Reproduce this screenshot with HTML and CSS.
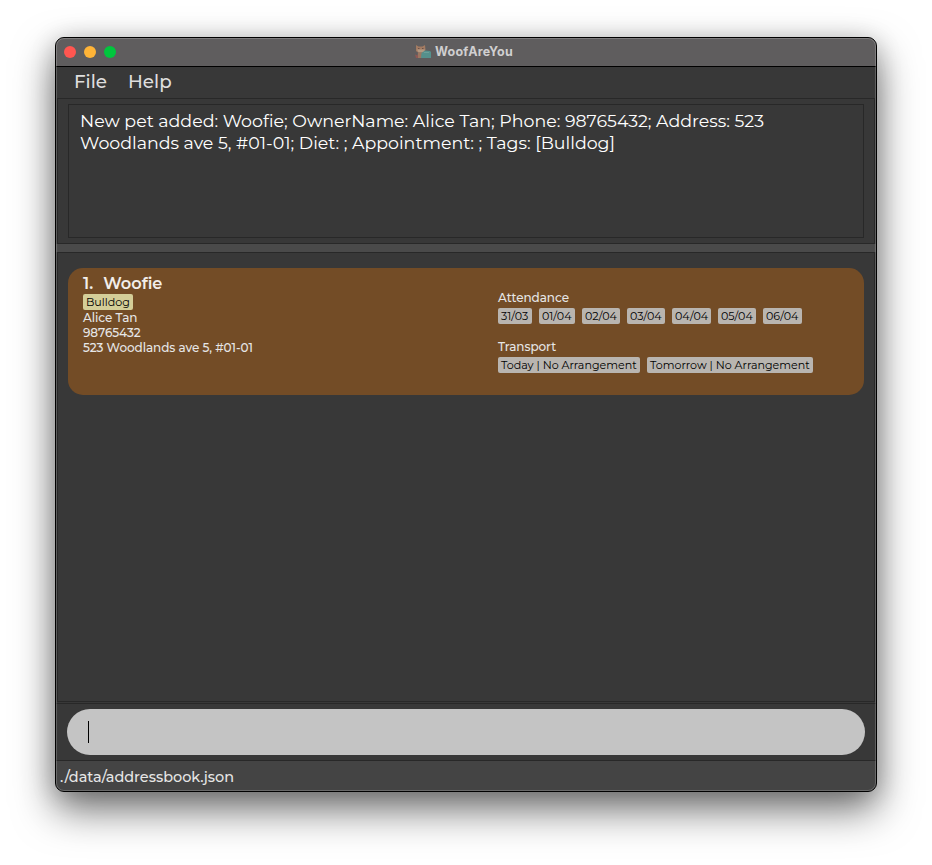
FILE: index.html
```html
<!DOCTYPE html>
<html lang="en">
<head>
<meta charset="utf-8">
<title>WoofAreYou</title>
<link rel="stylesheet" href="styles.css">
</head>
<body>
<div class="window">
  <header class="titlebar">
    <div class="lights"><i class="light red"></i><i class="light amber"></i><i class="light green"></i></div>
    <div class="title">
      <svg class="logo" width="16" height="14" viewBox="0 0 16 14">
        <path d="M1 0 3.500 1.500h4L10 0l.5 5-1.500 2.500H3L1 6z" fill="#a27b62"/>
        <path d="M2 4.500h8L8.500 7.500h-5z" fill="#b39a82"/>
        <path d="M3 3.500h1.500M7 3.500h1.500" stroke="#6c5049"/>
        <path d="M3 7.500h5V13H2.500z" fill="#9c7761"/>
        <path d="M0 9.500 3 10.500V13H1z" fill="#8f5855"/>
        <path d="M6.500 8 10 5.500l5 .5 1 1v6H6z" fill="#55908c"/>
        <path d="M9 7.500h5" stroke="#6b9f99"/>
      </svg>
      <span class="app-name">WoofAreYou</span>
    </div>
  </header>
  <nav class="menu"><span>File</span><span>Help</span></nav>
  <section class="result">
    <div class="result-box">
      <div>New pet added: Woofie; OwnerName: Alice Tan; Phone: 98765432; Address: 523</div>
      <div>Woodlands ave 5, #01-01; Diet: ; Appointment: ; Tags: [Bulldog]</div>
    </div>
  </section>
  <div class="splitter"></div>
  <main class="list">
    <article class="card">
      <div class="pet">
        <h2><span class="num">1.</span><span class="name">Woofie</span></h2>
        <div class="tags"><span class="tag breed">Bulldog</span></div>
        <p class="owner">Alice Tan</p>
        <p class="phone">98765432</p>
        <p class="address">523 Woodlands ave 5, #01-01</p>
      </div>
      <div class="schedule">
        <p class="attendance">Attendance</p>
        <div class="tags"><span class="tag w34">31/03</span><span class="tag w36">01/04</span><span class="tag w38">02/04</span><span class="tag w38">03/04</span><span class="tag w39">04/04</span><span class="tag w38">05/04</span><span class="tag w39">06/04</span></div>
        <p class="transport">Transport</p>
        <div class="tags"><span class="tag today">Today | No Arrangement</span><span class="tag tomorrow">Tomorrow | No Arrangement</span></div>
      </div>
    </article>
  </main>
  <section class="command"><div class="field"><i class="caret"></i></div></section>
  <footer class="status"><span>./data/addressbook.json</span></footer>
</div>
</body>
</html>
```
FILE: styles.css
```css
* { box-sizing: border-box; }
body {
  margin: 0;
  padding: 37px 55px 73px;
  height: 865px;
  overflow: hidden;
  background: #fff;
  font-family: Montserrat, Inter, sans-serif;
  color: #e6e6e6;
  white-space: nowrap;
}
.window {
  position: relative;
  display: flex;
  flex-direction: column;
  width: 822px;
  height: 755px;
  border: 1px solid #000;
  border-radius: 9px;
  overflow: hidden;
  background: #383838;
  box-shadow: 0 18px 40px rgba(0,0,0,.55), 0 3px 24px rgba(0,0,0,.18);
}
/* light rim inside the window frame */
.window::after {
  content: "";
  position: absolute;
  inset: 0;
  border: 1px solid rgba(255,255,255,.2);
  border-radius: 8px;
}
.titlebar {
  display: grid;
  grid-template-columns: 1fr auto 1fr;
  align-items: center;
  height: 29px;
  flex: none;
  background: #5f5d5e;
  border-bottom: 1px solid #000;
}
.lights { display: flex; gap: 8px; padding-left: 8px; }
.light { width: 12px; height: 12px; border-radius: 50%; }
.red { background: #ff5650; }
.amber { background: #ffb437; }
.green { background: #00c63d; }
.title { display: flex; align-items: center; gap: 4px; margin: -1px 4px 0 0; font-family: Inter, sans-serif; font-size: 12.5px; font-weight: 700; color: #d0cfd0; }
.app-name { letter-spacing: .25px; }
.menu { display: flex; gap: 21px; height: 31px; flex: none; padding-left: 18px; font-size: 18.3px; font-weight: 500; line-height: 30px; color: #dedede; }
.result { height: 146px; flex: none; border: 1px solid #282828; margin: 0 1px; padding: 5px 10px; }
.result-box { height: 134px; border: 1px solid #282828; padding: 5px 11px; font-size: 17.42px; line-height: 22px; color: #fff; }
.splitter { height: 8px; flex: none; background: #4a4a4a; }
.list { height: 450px; flex: none; border: 1px solid #282828; margin: 0 1px; padding: 15px 10px; }
.card { display: grid; grid-template-columns: 415px 1fr; height: 127px; padding: 7px 15px; border-radius: 15px; background: #734c26; font-size: 12px; font-weight: 500; line-height: 15px; }
.card p, .card h2 { margin: 0; }
.card p { height: 15px; line-height: 16px; letter-spacing: -.05px; }
.card h2 { display: flex; gap: 10px; height: 19px; font-size: 16.2px; line-height: 17px; font-weight: 600; color: #f2eeea; }
.tags { display: flex; gap: 7px; height: 16px; }
.tag { height: 16px; padding-left: 3px; border-radius: 2px; background: #b9b5b0; color: #000; font-size: 11.1px; font-weight: 400; line-height: 16px; }
.breed { width: 50px; background: #d4ce98; }
.w34 { width: 34px; }
.w36 { width: 36px; }
.w38 { width: 38px; }
.w39 { width: 39px; }
.schedule { padding-top: 15px; }
.card .schedule p { height: 18px; line-height: 15px; }
.card .schedule .transport { margin-top: 15px; }
.today { width: 142px; }
.tomorrow { width: 166px; }
.command { height: 58px; flex: none; border-top: 1px solid #282828; border-bottom: 1px solid #282828; margin-top: 1px; padding: 5px 11px; }
.field { height: 46px; border-radius: 23px; background: #c4c4c4; padding: 12px 21px; }
.caret { display: block; width: 1px; height: 22px; background: #000; }
.status { flex: 1; padding-left: 4px; background: #444; font-size: 14.45px; font-weight: 500; line-height: 32px; }
```
